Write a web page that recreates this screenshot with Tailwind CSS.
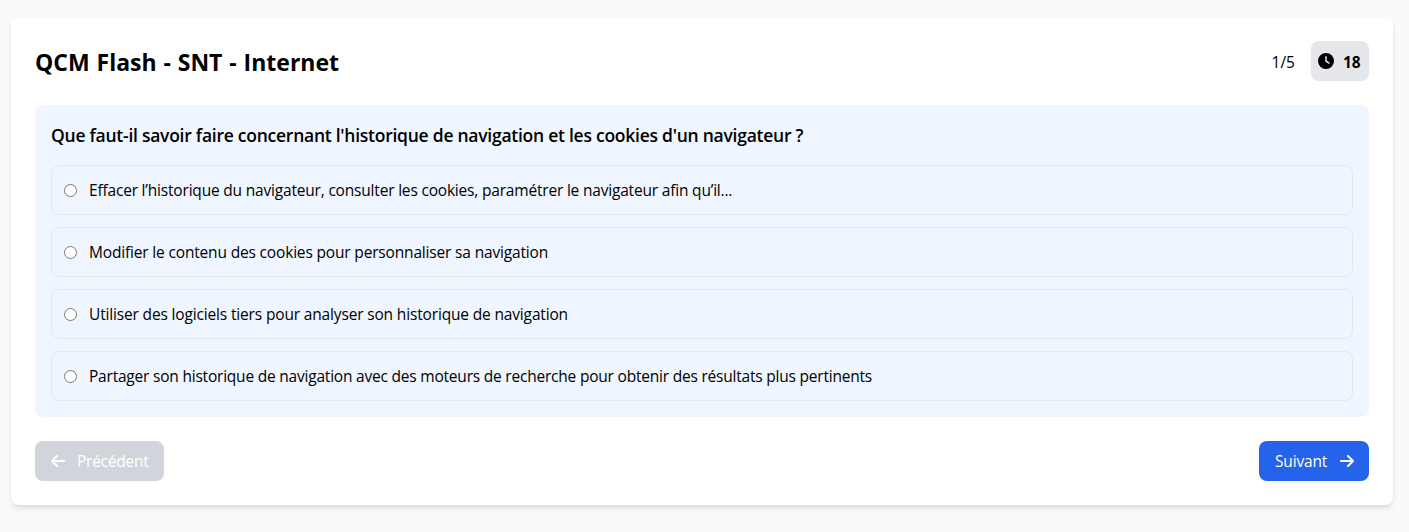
<!DOCTYPE html>
<html lang="fr">
<head>
<meta charset="utf-8">
<title>QCM Flash - SNT - Internet</title>
<script src="https://cdn.jsdelivr.net/npm/@tailwindcss/browser@4"></script>
</head>
<body class="h-[532px] overflow-hidden bg-[#f9fafb] pt-[17px] pr-4 pl-[11px] font-['Open_Sans','Noto_Sans',sans-serif] text-[15.5px] leading-6 whitespace-nowrap text-black">
<main class="h-[488px] rounded-lg bg-white p-6 shadow-md">
  <header class="mb-6 flex h-10 items-center justify-between">
    <h1 class="pt-0.5 text-[23px] leading-8 font-bold [word-spacing:0.9px]">QCM Flash - SNT - Internet</h1>
    <div class="flex items-center gap-4">
      <span class="pt-px">1/5</span>
      <div class="flex h-10 w-[58px] items-center rounded-lg bg-gray-200 pl-[7px] font-bold">
        <svg class="mr-[9px] size-4 shrink-0" viewBox="0 0 512 512" fill="currentColor"><path d="M256 0a256 256 0 1 1 0 512A256 256 0 1 1 256 0zM232 120V256c0 8 4 15.500 10.700 20l96 64c11 7.400 25.900 4.400 33.300-6.700s4.400-25.900-6.700-33.300L280 243.200V120c0-13.300-10.700-24-24-24s-24 10.700-24 24z"/></svg>
        <span class="pt-px">18</span>
      </div>
    </div>
  </header>

  <section class="mb-6 h-[312px] rounded-lg bg-[#eff6ff] p-4">
    <h2 class="mb-4 h-7 text-[17.5px] leading-7 font-semibold tracking-[-0.254px]">Que faut-il savoir faire concernant l'historique de navigation et les cookies d'un navigateur ?</h2>
    <div class="flex flex-col gap-3">
      <label class="flex h-[50px] items-center rounded-lg border border-gray-200 px-3">
        <input type="radio" name="reponse" class="mr-3 size-[13px]">
        <span class="tracking-[-0.19px]">Effacer l’historique du navigateur, consulter les cookies, paramétrer le navigateur afin qu’il...</span>
      </label>
      <label class="flex h-[50px] items-center rounded-lg border border-gray-200 px-3">
        <input type="radio" name="reponse" class="mr-3 size-[13px]">
        <span class="tracking-[-0.168px]">Modifier le contenu des cookies pour personnaliser sa navigation</span>
      </label>
      <label class="flex h-[50px] items-center rounded-lg border border-gray-200 px-3">
        <input type="radio" name="reponse" class="mr-3 size-[13px]">
        <span class="tracking-[-0.157px]">Utiliser des logiciels tiers pour analyser son historique de navigation</span>
      </label>
      <label class="flex h-[50px] items-center rounded-lg border border-gray-200 px-3">
        <input type="radio" name="reponse" class="mr-3 size-[13px]">
        <span class="tracking-[-0.21px]">Partager son historique de navigation avec des moteurs de recherche pour obtenir des résultats plus pertinents</span>
      </label>
    </div>
  </section>

  <footer class="flex justify-between text-white">
    <button class="flex h-10 w-[129px] items-center rounded-lg bg-[#d1d5db] pl-4">
      <svg class="mr-3 h-4 w-3.5 shrink-0" viewBox="0 0 448 512" fill="currentColor"><path d="M9.400 233.400c-12.500 12.500-12.500 32.800 0 45.300l160 160c12.500 12.500 32.800 12.500 45.300 0s12.500-32.800 0-45.300L109.200 288 416 288c17.700 0 32-14.300 32-32s-14.300-32-32-32l-306.700 0L214.600 118.600c12.500-12.500 12.500-32.800 0-45.300s-32.800-12.500-45.300 0l-160 160z"/></svg>
      <span class="tracking-[-0.25px]">Précédent</span>
    </button>
    <button class="flex h-10 w-[110px] items-center justify-between rounded-lg bg-[#2563eb] pr-[15px] pl-4">
      <span class="tracking-[-0.17px]">Suivant</span>
      <svg class="h-4 w-3.5 shrink-0" viewBox="0 0 448 512" fill="currentColor"><path d="M438.600 278.600c12.500-12.500 12.500-32.800 0-45.300l-160-160c-12.500-12.500-32.800-12.500-45.300 0s-12.500 32.800 0 45.300L338.800 224 32 224c-17.700 0-32 14.300-32 32s14.300 32 32 32l306.700 0L233.400 393.400c-12.500 12.500-12.500 32.800 0 45.300s32.800 12.500 45.300 0l160-160z"/></svg>
    </button>
  </footer>
</main>
</body>
</html>
